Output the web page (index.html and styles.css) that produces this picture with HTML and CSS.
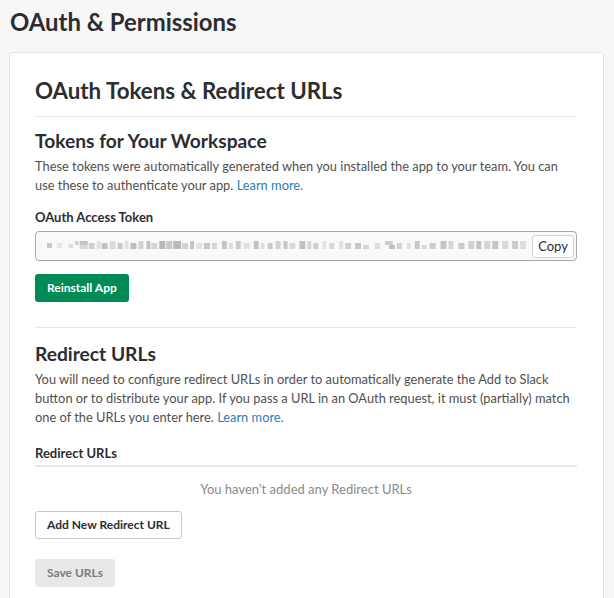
FILE: index.html
```html
<!DOCTYPE html>
<html lang="en">
<head>
<meta charset="utf-8">
<title>OAuth &amp; Permissions</title>
<link rel="stylesheet" href="styles.css">
</head>
<body>
<h1 class="page-title">OAuth &amp; Permissions</h1>
<section class="card">
  <h2 class="card-title">OAuth Tokens &amp; Redirect URLs</h2>

  <div class="section">
    <h3 class="section-title">Tokens for Your Workspace</h3>
    <p class="section-text">These tokens were automatically generated when you installed the app to your team. You can use these to authenticate your app. <a class="link" href="#">Learn more.</a></p>
    <div class="field-label">OAuth Access Token</div>
    <div class="token-field">
      <span class="token-value">
        <svg width="484" height="12" viewBox="0 0 484 12" aria-hidden="true">
          <g>
            <rect x="0" y="3" width="5" height="5" fill="#c9c9c9"/>
            <rect x="10" y="3" width="5" height="5" fill="#e6e6e6"/>
            <rect x="22" y="4" width="4" height="4" fill="#dcdcdc"/>
            <rect x="28" y="1" width="4" height="4" fill="#d3d3d3"/>
            <rect x="33" y="1" width="8" height="4" fill="#c4c4c4"/>
            <rect x="33" y="5" width="8" height="4" fill="#d9d9d9"/>
            <rect x="42" y="3" width="6" height="6" fill="#cfcfcf"/>
            <rect x="50" y="1" width="4" height="8" fill="#e2e2e2"/>
            <rect x="55" y="3" width="6" height="6" fill="#c0c0c0"/>
            <rect x="63" y="1" width="6" height="8" fill="#dadada"/>
            <rect x="71" y="3" width="5" height="6" fill="#c7c7c7"/>
            <rect x="78" y="1" width="4" height="8" fill="#e0e0e0"/>
            <rect x="84" y="3" width="6" height="6" fill="#bdbdbd"/>
            <rect x="92" y="1" width="5" height="8" fill="#d2d2d2"/>
            <rect x="100" y="1" width="4" height="8" fill="#c2c2c2"/>
            <rect x="105" y="3" width="6" height="6" fill="#d6d6d6"/>
            <rect x="113" y="1" width="6" height="8" fill="#b7b7b7"/>
            <rect x="120" y="1" width="6" height="8" fill="#c8c8c8"/>
            <rect x="127" y="1" width="8" height="8" fill="#bababa"/>
            <rect x="136" y="3" width="6" height="6" fill="#d0d0d0"/>
            <rect x="144" y="1" width="4" height="8" fill="#c4c4c4"/>
            <rect x="150" y="3" width="6" height="6" fill="#e3e3e3"/>
            <rect x="158" y="3" width="6" height="6" fill="#cacaca"/>
            <rect x="166" y="3" width="5" height="6" fill="#d7d7d7"/>
            <rect x="176" y="1" width="5" height="8" fill="#c6c6c6"/>
            <rect x="183" y="3" width="4" height="6" fill="#dedede"/>
            <rect x="190" y="1" width="5" height="8" fill="#cbcbcb"/>
            <rect x="198" y="3" width="6" height="6" fill="#e1e1e1"/>
            <rect x="208" y="1" width="5" height="8" fill="#c3c3c3"/>
            <rect x="215" y="3" width="4" height="6" fill="#dfdfdf"/>
            <rect x="222" y="3" width="5" height="6" fill="#c9c9c9"/>
            <rect x="230" y="1" width="5" height="8" fill="#d3d3d3"/>
            <rect x="238" y="1" width="4" height="8" fill="#c5c5c5"/>
            <rect x="244" y="3" width="6" height="6" fill="#dbdbdb"/>
            <rect x="254" y="1" width="6" height="8" fill="#c0c0c0"/>
            <rect x="262" y="1" width="4" height="8" fill="#d6d6d6"/>
            <rect x="268" y="3" width="5" height="6" fill="#cdcdcd"/>
            <rect x="277" y="1" width="4" height="8" fill="#e4e4e4"/>
            <rect x="284" y="3" width="5" height="6" fill="#d9d9d9"/>
            <rect x="294" y="1" width="4" height="8" fill="#e0e0e0"/>
            <rect x="300" y="3" width="6" height="6" fill="#cfcfcf"/>
            <rect x="310" y="3" width="6" height="6" fill="#c7c7c7"/>
            <rect x="318" y="5" width="6" height="4" fill="#d5d5d5"/>
            <rect x="330" y="3" width="5" height="6" fill="#dcdcdc"/>
            <rect x="340" y="1" width="8" height="4" fill="#cccccc"/>
            <rect x="344" y="5" width="6" height="4" fill="#bfbfbf"/>
            <rect x="352" y="3" width="5" height="6" fill="#d1d1d1"/>
            <rect x="362" y="3" width="4" height="6" fill="#e2e2e2"/>
            <rect x="370" y="1" width="5" height="8" fill="#c8c8c8"/>
            <rect x="377" y="5" width="5" height="4" fill="#d8d8d8"/>
            <rect x="385" y="3" width="6" height="6" fill="#cbcbcb"/>
            <rect x="396" y="1" width="6" height="8" fill="#c4c4c4"/>
            <rect x="404" y="1" width="5" height="8" fill="#d7d7d7"/>
            <rect x="414" y="3" width="6" height="6" fill="#cacaca"/>
            <rect x="424" y="1" width="6" height="8" fill="#d0d0d0"/>
            <rect x="432" y="1" width="5" height="8" fill="#c2c2c2"/>
            <rect x="440" y="1" width="6" height="8" fill="#d4d4d4"/>
            <rect x="448" y="1" width="6" height="8" fill="#c6c6c6"/>
            <rect x="458" y="1" width="6" height="8" fill="#d9d9d9"/>
            <rect x="468" y="1" width="6" height="8" fill="#cdcdcd"/>
            <rect x="476" y="1" width="6" height="8" fill="#dedede"/>
          </g>
        </svg>
      </span>
      <button class="btn-copy" type="button">Copy</button>
    </div>
    <button class="btn btn-primary" type="button">Reinstall App</button>
  </div>

  <div class="section section-divided">
    <h3 class="section-title">Redirect URLs</h3>
    <p class="section-text">You will need to configure redirect URLs in order to automatically generate the Add to Slack button or to distribute your app. If you pass a URL in an OAuth request, it must (partially) match one of the URLs you enter here. <a class="link" href="#">Learn more.</a></p>
    <div class="list-header">Redirect URLs</div>
    <div class="empty-note">You haven’t added any Redirect URLs</div>
    <button class="btn btn-outline" type="button">Add New Redirect URL</button>
    <button class="btn btn-disabled" type="button">Save URLs</button>
  </div>
</section>
</body>
</html>
```

FILE: styles.css
```css
* { box-sizing: border-box; }

html, body {
  margin: 0;
  padding: 0;
  background: #f7f7f7;
  font-family: Lato, "Open Sans", "Liberation Sans", sans-serif;
  color: #2c2d30;
  -webkit-font-smoothing: antialiased;
}

body {
  padding: 7px 10px 0 9px;
  overflow: hidden;
  height: 598px;
}

.page-title {
  margin: 0 0 15px 1px;
  font-size: 23.9px;
  line-height: 30px;
  font-weight: 700;
  color: #2c2d30;
}

.card {
  background: #fff;
  border: 1px solid #e3e3e3;
  border-radius: 4px;
  padding: 25px 26px 40px 25px;
}

.card-title {
  margin: 0;
  font-size: 22.3px;
  line-height: 26px;
  font-weight: 700;
  padding-bottom: 12px;
  border-bottom: 1px solid #e5e5e5;
}

.section {
  display: flex;
  flex-direction: column;
  align-items: stretch;
  padding-top: 12px;
}

.section-divided {
  margin-top: 25px;
  border-top: 1px solid #e5e5e5;
  padding-top: 14px;
}

.section-title {
  margin: 0 0 5px;
  font-size: 19.2px;
  line-height: 23px;
  font-weight: 700;
}

.section-text {
  margin: 0;
  font-size: 12.85px;
  line-height: 19px;
  color: #505050;
}

.link {
  color: #2a80b9;
  text-decoration: none;
}

.field-label {
  margin-top: 13px;
  font-size: 13px;
  line-height: 19px;
  font-weight: 700;
}

.token-field {
  margin-top: 4px;
  height: 30px;
  border: 1px solid #a8a8a8;
  border-radius: 4px;
  background: #f9f9f9;
  display: flex;
  align-items: center;
  padding: 0 2px 0 11px;
  gap: 4px;
}

.token-value {
  flex: 1;
  display: flex;
  overflow: hidden;
}

.token-value svg { display: block; }

.btn-copy {
  font-family: inherit;
  font-size: 13px;
  color: #2c2d30;
  background: #fff;
  border: 1px solid #d3d3d3;
  border-radius: 3px;
  height: 23px;
  width: 42px;
  padding: 0;
}

.btn {
  align-self: flex-start;
  font-family: inherit;
  font-size: 12px;
  font-weight: 700;
  height: 28px;
  padding: 0 11px;
  border-radius: 3px;
  border: 1px solid transparent;
  line-height: 26px;
  white-space: nowrap;
}

.btn-primary {
  margin-top: 13px;
  background: #008a56;
  color: #fff;
}

.list-header {
  margin-top: 17px;
  font-size: 13px;
  line-height: 19px;
  font-weight: 700;
  padding-bottom: 2px;
  border-bottom: 2px solid #e8e8e8;
}

.empty-note {
  margin-top: 13px;
  text-align: center;
  font-size: 13px;
  line-height: 19px;
  color: #8a8a8a;
}

.btn-outline {
  margin-top: 12px;
  background: #fff;
  border-color: #c8c8c8;
  color: #2c2d30;
}

.btn-disabled {
  margin-top: 20px;
  background: #e8e8e8;
  color: #7a7a7a;
}
```
